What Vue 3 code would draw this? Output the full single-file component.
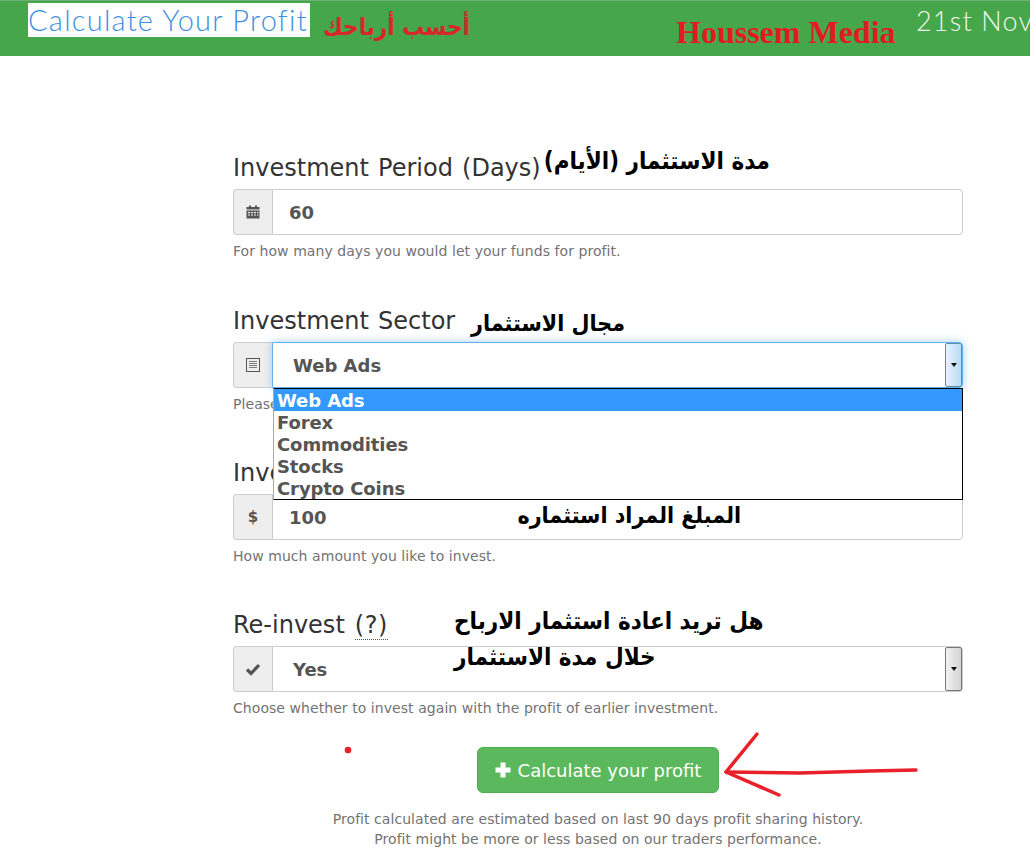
<script setup>
const groups = [
  { label: 'Investment Period (Days)', icon: 'cal', value: '60', kind: 'input', help: 'For how many days you would let your funds for profit.' },
  { label: 'Investment Sector', icon: 'list', value: 'Web Ads', kind: 'focus', help: 'Please select the sector you like to invest in.' },
  { label: 'Investment Amount', icon: 'usd', value: '100', kind: 'input', help: 'How much amount you like to invest.' },
  { label: 'Re-invest', icon: 'check', value: 'Yes', kind: 'select', help: 'Choose whether to invest again with the profit of earlier investment.' }
]
const options = ['Web Ads', 'Forex', 'Commodities', 'Stocks', 'Crypto Coins']
</script>

<template>
  <div class="page">
    <header class="bar">
      <h1 class="title">Calculate Your Profit</h1>
      <span class="title-ar" dir="rtl">أحسب أرباحك</span>
      <span class="brand">Houssem Media</span>
      <span class="date">21st Nov</span>
    </header>

    <main class="form">
      <section v-for="g in groups" :key="g.label" class="group">
        <label class="label">{{ g.label }}<abbr v-if="g.icon === 'check'" class="hint">(?)</abbr></label>
        <div class="field" :class="g.kind">
          <span class="addon">
            <svg v-if="g.icon === 'cal'" width="14" height="14" viewBox="0 0 14 14" fill="#555">
              <rect x="3" y="0.5" width="2" height="2.5" />
              <rect x="9" y="0.5" width="2" height="2.5" />
              <rect x="0.5" y="2" width="13" height="2.5" />
              <path d="M0.5 5.5h13v8h-13zM2 7v1.2h2V7zm3 0v1.2h2V7zm3 0v1.2h2V7zm3 0v1.2h1.5V7zM2 9.4v1.2h2V9.4zm3 0v1.2h2V9.4zm3 0v1.2h2V9.4zm3 0v1.2h1.5V9.4z" fill-rule="evenodd" />
            </svg>
            <svg v-else-if="g.icon === 'list'" width="14" height="14" viewBox="0 0 14 14" fill="none" stroke="#555">
              <rect x="0.5" y="0.5" width="13" height="13" />
              <path d="M3 3.5h8M3 5.5h8M3 7.5h8M3 9.5h8" stroke-opacity="0.75" />
            </svg>
            <b v-else-if="g.icon === 'usd'" class="usd">$</b>
            <svg v-else width="16" height="14" viewBox="0 0 16 14" fill="none" stroke="#555" stroke-width="3.2">
              <path d="M2 7.5l4 4L14 3" />
            </svg>
          </span>
          <div class="control" :class="{ sel: g.kind !== 'input' }">
            <span>{{ g.value }}</span>
            <span v-if="g.kind !== 'input'" class="spin"><i></i></span>
          </div>
          <ul v-if="g.kind === 'focus'" class="menu">
            <li v-for="(o, i) in options" :key="o" :class="{ on: i === 0 }">{{ o }}</li>
          </ul>
        </div>
        <p class="help">{{ g.help }}</p>
      </section>

      <div class="actions">
        <button class="btn" type="button">
          <svg width="16" height="16" viewBox="0 0 16 16" fill="#fff"><path d="M5.5 0.5h5v5h5v5h-5v5h-5v-5h-5v-5h5z" /></svg>
          Calculate your profit
        </button>
        <p class="note">Profit calculated are estimated based on last 90 days profit sharing history.<br />Profit might be more or less based on our traders performance.</p>
      </div>
    </main>

    <span class="ar a1" dir="rtl">مدة الاستثمار (الأيام)</span>
    <span class="ar a2" dir="rtl">مجال الاستثمار</span>
    <span class="ar a3" dir="rtl">المبلغ المراد استثماره</span>
    <span class="ar a4" dir="rtl">هل تريد اعادة استثمار الارباح<br />خلال مدة الاستثمار</span>

    <svg class="ink" width="1030" height="855" viewBox="0 0 1030 855" fill="none" stroke="#e8202a" stroke-width="3.5" stroke-linecap="round" stroke-linejoin="round">
      <path d="M757 734L726 772L779 795" />
      <path d="M726 772L800 773L870 771L916 770" />
      <circle cx="348" cy="750" r="1.6" fill="#e8202a" />
    </svg>
  </div>
</template>

<style>
html, body { background: #fff; overflow: hidden; }
</style>

<style scoped>
.page {
  position: relative;
  width: 1030px;
  height: 855px;
  overflow: hidden;
  font-family: "DejaVu Sans", Verdana, sans-serif;
  color: #333;
}
.bar {
  height: 55px;
  border-top: 1px solid #6fae78;
  background: #46a64a;
  display: flex;
  align-items: flex-start;
  padding-left: 28px;
  white-space: nowrap;
  overflow: hidden;
}
.bar > * { flex: none; }
.title {
  margin: 2px 0 0;
  width: 282px;
  height: 34px;
  background: #fff;
  color: #3f8fe0;
  font: 300 29px/34px Lato, sans-serif;
  letter-spacing: 1.25px;
  white-space: nowrap;
  overflow: hidden;
}
.title-ar {
  margin: 11px 0 0 15px;
  width: 145px;
  color: #d9262a;
  font: 700 24px/30px "DejaVu Sans Condensed", "DejaVu Sans", sans-serif;
  font-stretch: condensed;
  text-align: center;
}
.brand {
  margin: 13px 0 0 206px;
  width: 218px;
  color: #e01b22;
  font: 700 32px/36px "Liberation Serif", serif;
  white-space: nowrap;
}
.date {
  margin: 3px 0 0 22px;
  color: #eef7ee;
  font: 300 27px/34px Lato, sans-serif;
  letter-spacing: 1.2px;
}
.form {
  width: 730px;
  margin-left: 233px;
  padding-top: 95px;
}
.group { margin-bottom: 42px; }
.group:first-child { margin-bottom: 43px; }
.label {
  display: block;
  height: 34px;
  margin-bottom: 4px;
  font-size: 24px;
  line-height: 34px;
  word-spacing: 1.5px;
  color: #333;
}
.hint {
  margin-left: 10px;
  letter-spacing: 0.6px;
  border-bottom: 1px dotted #555;
}
.field {
  position: relative;
  display: flex;
  height: 46px;
  box-sizing: border-box;
}
.addon {
  width: 39px;
  flex: none;
  box-sizing: border-box;
  display: flex;
  align-items: center;
  justify-content: center;
  background: #eee;
  border: 1px solid #ccc;
  border-right: 0;
  border-radius: 4px 0 0 4px;
  color: #555;
}
.usd { font-size: 15px; }
.control {
  flex: 1;
  box-sizing: border-box;
  display: flex;
  align-items: center;
  justify-content: space-between;
  padding: 0 0 0 16px;
  background: #fff;
  border: 1px solid #ccc;
  border-radius: 0 4px 4px 0;
  color: #555;
  font-size: 18px;
  font-weight: 700;
}
.control.sel { padding-left: 20px; align-items: stretch; }
.control.sel > span:first-child { align-self: center; }
.focus .control {
  border-color: #66afe9;
  box-shadow: 0 0 8px rgba(102, 175, 233, 0.6);
}
.spin {
  width: 15px;
  flex: none;
  display: flex;
  align-items: center;
  justify-content: center;
  border: 1px solid #777;
  background: linear-gradient(90deg, #f2f2f2, #d4d4d4);
  border-radius: 2px;
}
.focus .spin {
  border-color: #5f8fae;
  background: linear-gradient(90deg, #e6f2fb, #b9dcf4);
}
.spin i {
  width: 0;
  height: 0;
  border: 3.5px solid transparent;
  border-top: 4px solid #111;
  border-bottom: 0;
  align-self: center;
}
.menu {
  position: absolute;
  z-index: 2;
  left: 40px;
  top: 46px;
  width: 690px;
  height: 112px;
  box-sizing: border-box;
  margin: 0;
  padding: 0;
  list-style: none;
  background: #fff;
  border: 1px solid #000;
  border-left-color: #aaa;
  color: #555;
  font-size: 18px;
  font-weight: 700;
  letter-spacing: -0.1px;
}
.menu li { height: 22px; line-height: 23px; padding-left: 3px; }
.menu li.on { background: #3399ff; color: #fff; }
.help {
  margin: 6px 0 0;
  height: 20px;
  font-size: 14px;
  line-height: 20px;
  letter-spacing: 0.06px;
  color: #737373;
  white-space: nowrap;
}
.actions { margin-top: -13px; text-align: center; }
.btn {
  display: inline-flex;
  align-items: center;
  justify-content: center;
  gap: 7px;
  width: 242px;
  height: 46px;
  padding: 0;
  background: #5cb85c;
  border: 1px solid #4cae4c;
  border-radius: 6px;
  color: #fff;
  font: 400 18px "DejaVu Sans", sans-serif;
}
.note {
  margin: 16px 0 0;
  font-size: 14px;
  line-height: 20px;
  letter-spacing: 0.05px;
  color: #737373;
}
.ar {
  position: absolute;
  z-index: 3;
  color: #000;
  font: 700 24px/36px "DejaVu Sans Condensed", "DejaVu Sans", sans-serif;
  font-stretch: condensed;
  white-space: nowrap;
}
.a1 { right: 260px; top: 143px; }
.a2 { right: 405px; top: 305px; font-size: 23px; }
.a3 { right: 289px; top: 497px; font-size: 23px; }
.a4 { left: 454px; top: 603px; text-align: left; }
.ink {
  position: absolute;
  z-index: 4;
  left: 0;
  top: 0;
  pointer-events: none;
}
</style>
